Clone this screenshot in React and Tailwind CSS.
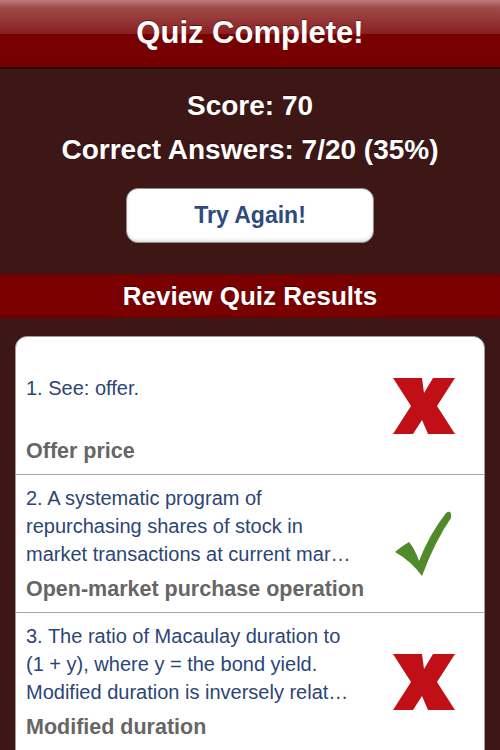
import React from 'react';

const results = [
  {
    id: 1,
    question: '1. See: offer.',
    term: 'Offer price',
    correct: false,
  },
  {
    id: 2,
    question: '2. A systematic program of repurchasing shares of stock in market transactions at current mar…',
    term: 'Open-market purchase operation',
    correct: true,
  },
  {
    id: 3,
    question: '3. The ratio of Macaulay duration to (1 + y), where y = the bond yield. Modified duration is inversely relat…',
    term: 'Modified duration',
    correct: false,
  },
];

const WrongMark = () => (
  <svg width="62" height="56" viewBox="0 0 62 56">
    <polygon points="0,0 29,0 31,15 40,0 62,0 44,28 62,56 35,56 29,42 20,56 0,56 18,28" fill="#c10f18" />
  </svg>
);

const RightMark = () => (
  <svg width="58" height="66" viewBox="0 0 58 66">
    <path
      d="M0,41 Q7,35 14,31 Q20,38 24,50 Q34,24 51,2 Q57,-2 56,7 Q40,30 27,65 Q16,50 0,41 Z"
      fill="#518a2a"
    />
  </svg>
);

const App = () => {
  return (
    <div className="min-h-screen w-[500px] h-[750px] overflow-hidden bg-[#3d1715] font-['Liberation_Sans',Arial,sans-serif]">
      <header className="h-[69px] border-b-2 border-[#2a0505] bg-[linear-gradient(180deg,#bb7a7a_0%,#a04a4a_12%,#8a2020_50%,#780000_51%,#760000_100%)] flex items-center justify-center">
        <h1 className="text-white font-bold text-[31px] [text-shadow:0_-1px_0_rgba(0,0,0,0.45)]">Quiz Complete!</h1>
      </header>

      <section className="pt-[15px] text-center text-white font-bold text-[28px] leading-[44px] [text-shadow:0_-1px_0_rgba(0,0,0,0.4)]">
        <div>Score: 70</div>
        <div>Correct Answers: 7/20 (35%)</div>
      </section>

      <div className="mt-[16px] flex justify-center">
        <button className="w-[248px] h-[55px] rounded-[12px] bg-white border border-[#8f8f8f] shadow-[inset_0_-2px_3px_rgba(0,0,0,0.12)] text-[#2f4a7c] font-bold text-[23px]">
          Try Again!
        </button>
      </div>

      <div className="mt-[31px] h-[44px] bg-[linear-gradient(180deg,#6a0000_0%,#7a0000_10%,#7a0000_90%,#6a0000_100%)] flex items-center justify-center">
        <h2 className="text-white font-bold text-[26px] [text-shadow:0_-1px_0_rgba(0,0,0,0.4)]">Review Quiz Results</h2>
      </div>

      <ul className="mt-[18px] mx-[15px] bg-white border border-[#9c9c9c] rounded-t-[12px] overflow-hidden">
        {results.map((item) => (
          <li key={item.id} className="flex items-center border-b border-[#a8a8a8] last:border-b-0 pl-[10px] pr-[29px] pt-[9px] pb-[9px]">
            <div className="flex-1">
              <div className="h-[84px] flex items-center">
                <p className="w-[334px] text-[20px] leading-[28px] text-[#2c4577]">{item.question}</p>
              </div>
              <div className="mt-[7px] text-[21.5px] leading-[28px] font-bold text-[#666666]">{item.term}</div>
            </div>
            <div className="w-[62px] flex justify-center">
              {item.correct ? <RightMark /> : <WrongMark />}
            </div>
          </li>
        ))}
      </ul>
    </div>
  );
};

export default App;
